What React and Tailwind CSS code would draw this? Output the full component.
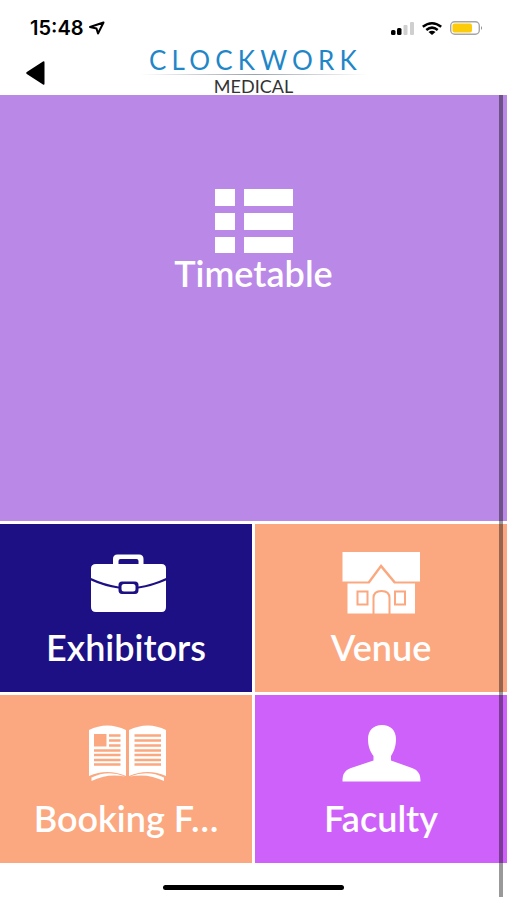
import React from 'react';

const IconeLista = () => (
  <svg viewBox="0 0 80 64" className="w-20 h-16" fill="currentColor" aria-hidden="true">
    <path d="M1 0h20v17H1zM30 0h49v17H30zM1 24h20v17H1zM30 24h49v17H30zM1 48h20v16H1zM30 48h49v16H30z" />
  </svg>
);

const IconeMaleta = () => (
  <svg viewBox="0 0 80 64" className="w-20 h-16" fill="currentColor" aria-hidden="true">
    <path
      fillRule="evenodd"
      d="M27 13V8q0-4.500 4.500-4.500h21.500q4.500 0 4.500 4.500v5h18q4.500 0 4.500 4.500V27q-14 6.500-27.500 8.500V34q0-3.500-3.500-3.500H36q-3.500 0-3.500 3.500v1.500Q18 33 5 27v-9.500Q5 13 10 13zM32.500 13h20V10q0-2-2-2h-16q-2 0-2 2z"
    />
    <path d="M5 29.500Q18 35.500 32.500 37.500V39q0 4 3.500 4H49q3.500 0 3.500-4v-1.500Q66 35.500 80 29.500V56q0 5-4.500 5H10q-5 0-5-5z" />
    <rect x="35.500" y="33" width="14" height="7.500" rx="2.500" />
  </svg>
);

const IconeCasa = () => (
  <svg viewBox="0 0 80 64" className="w-20 h-16" aria-hidden="true">
    <path fill="currentColor" d="M1.500 1H79v29.500H54.500L40 13 27 30.500H1.500z" />
    <path fill="currentColor" d="M6.500 32.500H28.500L40 17l13 15.500h21V62.500H6.500z" />
    <g fill="none" stroke="#fba880" strokeWidth="2">
      <rect x="16.500" y="40.500" width="10" height="13" />
      <rect x="54" y="40.500" width="10" height="13" />
      <path d="M32.500 63V47q0-7 8-7t8 7v16" />
    </g>
  </svg>
);

const IconeLivro = () => (
  <svg viewBox="0 0 80 64" className="w-20 h-16" aria-hidden="true">
    <path fill="currentColor" d="M3 8Q21-1 40 8v46Q21 46 3 54zM43 8Q62-1 80 8v46Q62 46 43 54z" />
    <path fill="currentColor" d="M5.500 55.500Q22 47.500 39 54.500Q21 51 5.500 59zM44 54.500Q62 47.500 78 55.500V59Q62 51 44 54.500z" />
    <path fill="#fba880" d="M8 12h12.500v12.500H8z" />
    <path
      stroke="#fba880"
      strokeWidth="2.500"
      d="M23 13.500h11.500M23 18.500h11.500M23 23.500h11.500M8 28.500h26.500M8 33h26.500M8 38h26.500M8 42.500h26.500M48.500 13.500H75M48.500 18.500H75M48.500 23.500H75M48.500 28.500H75M48.500 33H75M48.500 38H75M48.500 42.500H75"
    />
  </svg>
);

const IconePessoa = () => (
  <svg viewBox="0 0 80 64" className="w-20 h-16" fill="currentColor" aria-hidden="true">
    <path d="M41 3C32.500 3 27 8.500 27 17c0 8 2.500 13 5.500 17v4.500L10 46c-6.500 2.500-8.500 6-8.500 13.500H79.500C79.500 52 77.500 48.500 71 46l-21-7.500V34c2.500-4 5-9 5-17C55 8.500 49.500 3 41 3z" />
  </svg>
);

const itens = [
  { nome: 'Exhibitors', cor: 'bg-[#1d1084]', Icone: IconeMaleta },
  { nome: 'Venue', cor: 'bg-[#fba880]', Icone: IconeCasa },
  { nome: 'Booking F…', cor: 'bg-[#fba880]', Icone: IconeLivro },
  { nome: 'Faculty', cor: 'bg-[#ce61fa]', Icone: IconePessoa }
];

const BarraStatus = () => (
  <div className="flex items-center justify-between h-12 pt-2 pl-[30px] pr-6">
    <div className="flex items-center gap-1">
      <span className="font-[Inter,sans-serif] text-xl leading-5 font-semibold">15:48</span>
      <svg viewBox="0 0 17 14" className="w-[17px] h-3.5" fill="none" stroke="currentColor" strokeWidth="2" strokeLinejoin="round" aria-hidden="true">
        <path d="M15.500 1.500 2 6l6.500 1.500L10 12.500z" />
      </svg>
    </div>
    <div className="flex items-center gap-2">
      <svg viewBox="0 0 23 13" className="w-[23px] h-[13px]" aria-hidden="true">
        <rect x="0" y="8" width="4.500" height="5" rx="1.500" />
        <rect x="6" y="6" width="4.500" height="7" rx="1.500" />
        <rect x="12.500" y="3" width="4" height="10" rx="1" fill="#cfcfcf" />
        <rect x="19" y="0" width="4" height="13" rx="1" fill="#cfcfcf" />
      </svg>
      <svg viewBox="0 0 20 13" className="w-5 h-[13px]" fill="none" stroke="currentColor" strokeWidth="2.500" aria-hidden="true">
        <path d="M.8 4.800Q10-2.200 19.200 4.800M4.300 8Q10 3.300 15.700 8" />
        <path fill="currentColor" stroke="none" d="M6.500 10q3.500-2.500 7 0L10 13z" />
      </svg>
      <svg viewBox="0 0 33 14" className="w-[33px] h-3.5" aria-hidden="true">
        <rect x=".7" y=".7" width="28.600" height="12.600" rx="4" fill="none" stroke="#a5a5a5" strokeWidth="1.400" />
        <rect x="2.500" y="2.500" width="19.500" height="9" rx="2" fill="#fccb0a" />
        <path d="M31 5q2 2 0 4z" fill="#8a8a8a" />
      </svg>
    </div>
  </div>
);

const Cabecalho = () => (
  <header className="bg-white text-black">
    <BarraStatus />
    <div className="grid grid-cols-[64px_1fr_64px] items-center h-[47px]">
      <button type="button" aria-label="Back" className="justify-self-end mr-[19px]">
        <svg viewBox="0 0 19 24" className="w-[19px] h-6" fill="currentColor" aria-hidden="true">
          <path d="M17 .5q1.500-1 1.500 1v21q0 2-1.500 1L.8 13q-1.200-1 0-2z" />
        </svg>
      </button>
      <div className="flex flex-col items-center font-[Lato,sans-serif]">
        <span className="mb-0.5 pl-1 text-[26px] leading-6 font-normal tracking-[0.2em] text-[#1f86c8]">CLOCKWORK</span>
        <div className="w-[228px] h-px bg-linear-to-r from-transparent via-gray-400 to-transparent"></div>
        <span className="text-lg leading-[22px] font-normal text-[#333333]">MEDICAL</span>
      </div>
    </div>
  </header>
);

const App = () => {
  return (
    <div className="relative flex flex-col min-h-screen bg-white font-[Lato,sans-serif]">
      <Cabecalho />

      <main className="flex-1 flex flex-col gap-[3px] text-white">
        <button type="button" className="flex-1 flex flex-col items-center pt-[94px] bg-[#ba88e7]">
          <IconeLista />
          <span className="text-4xl leading-10 font-semibold">Timetable</span>
        </button>

        <div className="grid grid-cols-2 gap-[3px]">
          {itens.map(({ nome, cor, Icone }) => (
            <button key={nome} type="button" className={`flex flex-col items-center h-[168px] pt-[27px] ${cor}`}>
              <Icone />
              <span className="mt-3 text-4xl leading-10 font-semibold whitespace-nowrap">{nome}</span>
            </button>
          ))}
        </div>
      </main>

      {/* Indicador inferior */}
      <footer className="flex justify-center items-center h-[37px] pt-3">
        <div className="w-[181px] h-[5px] rounded-full bg-black"></div>
      </footer>

      {/* Barra de rolagem */}
      <div className="absolute top-[95px] bottom-[3px] right-1 w-1 bg-black/40"></div>
    </div>
  );
};

export default App;
